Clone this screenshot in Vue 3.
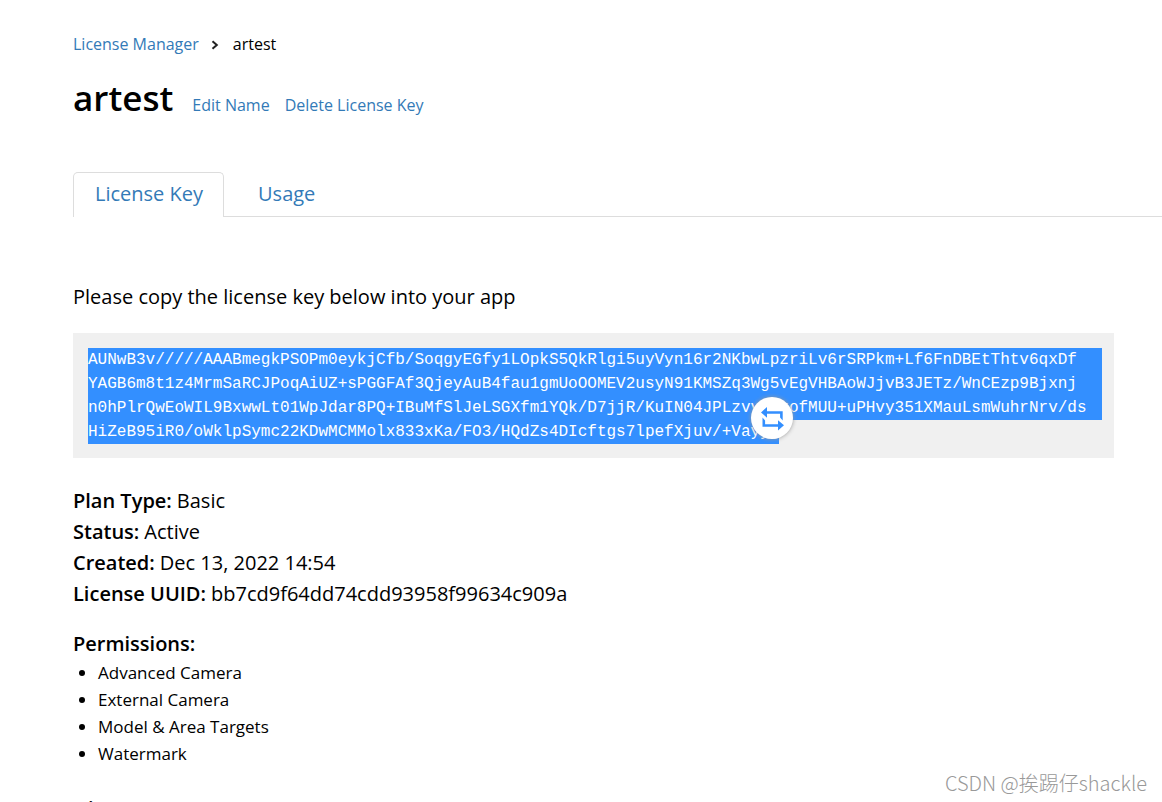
<script setup>
const keyLines = [
  'AUNwB3v/////AAABmegkPSOPm0eykjCfb/SoqgyEGfy1LOpkS5QkRlgi5uyVyn16r2NKbwLpzriLv6rSRPkm+Lf6FnDBEtThtv6qxDf',
  'YAGB6m8t1z4MrmSaRCJPoqAiUZ+sPGGFAf3QjeyAuB4fau1gmUoOOMEV2usyN91KMSZq3Wg5vEgVHBAoWJjvB3JETz/WnCEzp9Bjxnj',
  'n0hPlrQwEoWIL9BxwwLt01WpJdar8PQ+IBuMfSlJeLSGXfm1YQk/D7jjR/KuIN04JPLzvvnmxofMUU+uPHvy351XMauLsmWuhrNrv/ds',
  'HiZeB95iR0/oWklpSymc22KDwMCMMolx833xKa/FO3/HQdZs4DIcftgs7lpefXjuv/+Vayyj',
]
const details = [
  { label: 'Plan Type:', value: 'Basic' },
  { label: 'Status:', value: 'Active' },
  { label: 'Created:', value: 'Dec 13, 2022 14:54' },
  { label: 'License UUID:', value: 'bb7cd9f64dd74cdd93958f99634c909a' },
]
const permissions = ['Advanced Camera', 'External Camera', 'Model & Area Targets', 'Watermark']
</script>

<template>
  <main class="page">
    <nav class="crumbs" aria-label="Breadcrumb">
      <a href="#">License Manager</a>
      <svg class="chevron" viewBox="0 0 8 10" aria-hidden="true"><path d="M1.5 1.2 5.8 5 1.5 8.8" /></svg>
      <span>artest</span>
    </nav>

    <header class="title">
      <h1>artest</h1>
      <a href="#">Edit Name</a>
      <a href="#">Delete License Key</a>
    </header>

    <nav class="tabs" aria-label="License sections">
      <a class="tab active" href="#">License Key</a>
      <a class="tab" href="#">Usage</a>
    </nav>

    <p class="intro">Please copy the license key below into your app</p>

    <div class="keybox">
      <code v-for="line in keyLines" :key="line" class="keyline">{{ line }}</code>
      <button class="swap" type="button" aria-label="Translate selection">
        <svg viewBox="0 0 24 24" aria-hidden="true">
          <path d="M1 6.4 7 1v4.200h15.700v9.300l-2.600-3V7.800H7v4z" />
          <path d="M24 19.300 18 24.600v-3.800H2.500v-9.300l2.600 3v3.700H18v-4z" />
        </svg>
      </button>
    </div>

    <dl class="details">
      <div v-for="item in details" :key="item.label">
        <dt>{{ item.label }}</dt>
        <dd>{{ item.value }}</dd>
      </div>
    </dl>

    <h2>Permissions:</h2>
    <ul>
      <li v-for="item in permissions" :key="item">{{ item }}</li>
    </ul>
    <h2>History:</h2>

    <div class="watermark">CSDN @挨踢仔shackle</div>
  </main>
</template>

<style>
body {
  margin: 0;
  background: #fff;
}
</style>

<style scoped>
.page {
  box-sizing: border-box;
  height: 100vh;
  overflow: hidden;
  padding: 32px 0 0 73px;
  color: #000;
  font: 400 20px/31px "Open Sans", sans-serif;
}
a {
  color: #337ab7;
  text-decoration: none;
}
.crumbs {
  display: flex;
  align-items: center;
  font-size: 16px;
  line-height: 24px;
}
.chevron {
  width: 8px;
  height: 10px;
  margin: 2px 14px 0 12px;
  fill: none;
  stroke: #222;
  stroke-width: 2;
}
.title {
  display: flex;
  align-items: baseline;
  gap: 15px;
  margin-top: 18px;
  font-size: 16px;
  line-height: 48px;
}
h1 {
  margin: 0 4px 0 0;
  font-size: 35px;
  font-weight: 600;
  line-height: 48px;
}
.tabs {
  display: flex;
  margin-top: 43px;
  border-bottom: 1px solid #ddd;
}
.tab {
  margin-bottom: -1px;
  padding: 5px 20px 8px 21px;
  border: 1px solid transparent;
  border-bottom: 0;
  border-radius: 5px 5px 0 0;
}
.tab.active {
  margin-right: 12px;
  border-color: #ddd;
  background: #fff;
}
.intro {
  margin: 64px 0 21px;
}
.keybox {
  position: relative;
  display: flex;
  flex-direction: column;
  margin-right: 48px;
  padding: 15px 12px 14px 15px;
  background: #f0f0f0;
}
.keyline {
  background: #338fff;
  color: #fff;
  font: 400 16px/24px "Liberation Mono", monospace;
  white-space: nowrap;
}
.keyline:last-of-type {
  align-self: flex-start;
}
.swap {
  position: absolute;
  top: 64px;
  left: 678px;
  display: grid;
  place-items: center;
  width: 42px;
  height: 42px;
  padding: 0;
  border: 0;
  border-radius: 50%;
  background: #fff;
  box-shadow: 0 0 4px #999;
}
.swap svg {
  width: 24px;
  height: 24px;
  overflow: visible;
  fill: #338fff;
}
.details {
  margin: 27px 0 19px;
}
dt,
dd {
  display: inline;
  margin: 0;
}
dt {
  margin-right: 5px;
  font-weight: 600;
}
h2 {
  margin: 0;
  font-size: 20px;
  font-weight: 600;
  line-height: 31px;
}
ul {
  margin: 0 0 26px;
  padding-left: 25px;
  font-size: 17px;
  line-height: 27px;
}
.watermark {
  position: absolute;
  right: 15px;
  bottom: 5px;
  color: #999;
  font: 300 20px/28px "Noto Sans CJK SC", sans-serif;
}
</style>
